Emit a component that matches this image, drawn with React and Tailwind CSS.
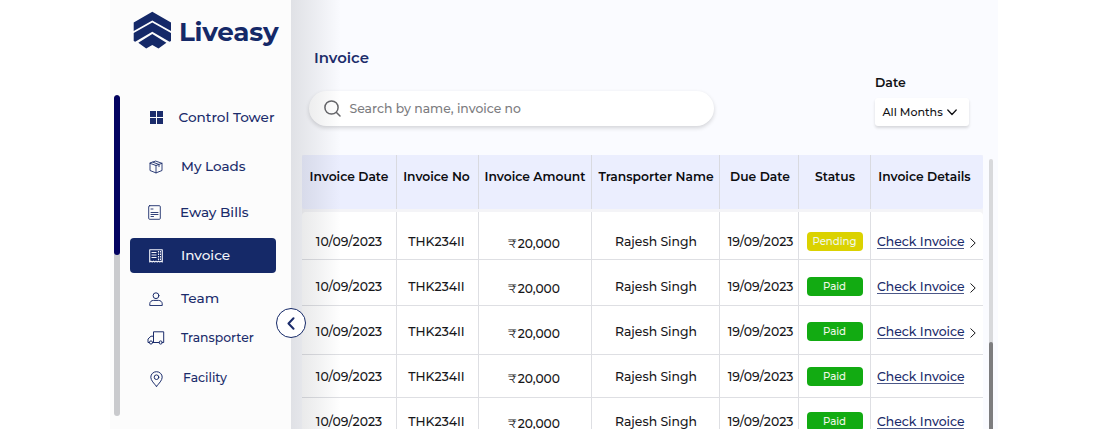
import React from 'react';

const iconProps = {
  fill: 'none',
  stroke: 'currentColor',
  strokeLinecap: 'round',
  strokeLinejoin: 'round',
};

const GridIcon = () => (
  <svg width="13" height="13" viewBox="0 0 13 13" fill="currentColor">
    <path d="M0 0h6v6H0zM7 0h6v6H7zM0 7h6v6H0zM7 7h6v6H7z" />
  </svg>
);

const BoxIcon = () => (
  <svg width="14" height="14" viewBox="0 0 14 14" {...iconProps} strokeWidth=".9">
    <path d="M7 1.200 13 3.300v7.200L7 12.900 1 10.500V3.300zM1 3.300 7 5.500l6-2.200M7 5.500v7.400M4 2.200l6 2.300v2.200" />
  </svg>
);

const BillIcon = () => (
  <svg width="13" height="15" viewBox="0 0 13 15" {...iconProps} strokeWidth=".9">
    <rect x=".7" y=".7" width="11.600" height="13.600" rx="1" />
    <path d="M3 4h2M3 7.500h7M3 9.500h7M3 11.500h2.500" />
  </svg>
);

const ReceiptIcon = () => (
  <svg width="14" height="14" viewBox="0 0 14 14" {...iconProps} strokeLinecap="butt" strokeWidth="1.100">
    <path d="M.7.700h12.600v12.300l-1.200-.9-1.300.9-1.300-.9-1.200.9L7 12.100l-1.300.9-1.300-.9-1.200.9-1.300-.9-1.200.9z" />
    <path d="M2.500 3.500h5M2.500 6h5M2.500 8.500h5" />
    <path d="M9.500 2v9M11.500 2v9" strokeDasharray="1.500 1" />
  </svg>
);

const PersonIcon = () => (
  <svg width="14" height="14" viewBox="0 0 14 14" {...iconProps}>
    <circle cx="7" cy="3.700" r="2.900" />
    <path d="M.8 13.200v-1.500c0-2 1.800-3.300 3.700-3.300h5c1.900 0 3.700 1.300 3.700 3.300v1.500z" />
  </svg>
);

const TruckIcon = () => (
  <svg width="18" height="14" viewBox="0 0 18 14" {...iconProps}>
    <path d="M6.500 11.500V.8h10.200v10.700h-1.400M6.500 5.200H4L1 8v3.500h1.300M5.500 11.500h6.700" />
    <circle cx="4" cy="11.500" r="1.600" />
    <circle cx="13.700" cy="11.500" r="1.600" />
  </svg>
);

const PinIcon = () => (
  <svg width="13" height="16" viewBox="0 0 13 16" {...iconProps}>
    <path d="M6.500 15.300C4 12.500.8 9.200.8 6.200a5.700 5.500 0 0 1 11.400 0c0 3-3.200 6.300-5.700 9.100z" />
    <circle cx="6.500" cy="6.200" r="2.300" />
  </svg>
);

const menu = [
  { label: 'Control Tower', Icon: GridIcon, row: 'h-[51px]', icon: 'pl-[5px]', text: 'pl-[1.500px] text-[13.600px]' },
  { label: 'My Loads', Icon: BoxIcon, row: 'h-[47px]', icon: 'pl-[5px]', text: 'pl-[4px] text-[13.500px]' },
  { label: 'Eway Bills', Icon: BillIcon, row: 'h-[44px]', icon: 'pl-[2px]', text: 'pl-[3px] text-[13.600px]' },
  { label: 'Invoice', Icon: ReceiptIcon, row: 'h-[35px] mt-[4px] rounded-[4px] bg-[#152968] text-[#f3f4fa]', icon: 'pl-[4px]', text: 'pl-[4px] text-[13.600px]' },
  { label: 'Team', Icon: PersonIcon, row: 'h-[43px] mt-[4px]', icon: 'pl-[4px]', text: 'pl-[4px] text-[13.700px]' },
  { label: 'Transporter', Icon: TruckIcon, row: 'h-[35px]', icon: 'pl-[4px]', text: 'pl-[4px] pt-px text-[12.400px]' },
  { label: 'Facility', Icon: PinIcon, row: 'h-[47px]', icon: 'pl-[5px]', text: 'pl-[6px] text-[12.400px]' },
];

const columns = 'grid grid-cols-[95px_82px_113px_128px_79px_72px_112px]';

const headings = [
  { label: 'Invoice Date', pad: '' },
  { label: 'Invoice No', pad: 'pr-[2px]' },
  { label: 'Invoice Amount', pad: '' },
  { label: 'Transporter Name', pad: 'pl-px' },
  { label: 'Due Date', pad: 'pl-[2px]' },
  { label: 'Status', pad: 'pl-px' },
  { label: 'Invoice Details', pad: 'pr-[5px]' },
];

const rows = [
  { status: 'Pending', arrow: true, box: 'h-[48px]', cell: 'pt-[20px]' },
  { status: 'Paid', arrow: true, box: 'h-[46px]', cell: 'pt-[17px]' },
  { status: 'Paid', arrow: true, box: 'h-[49px]', cell: 'pt-[16px]' },
  { status: 'Paid', arrow: false, box: 'h-[43px]', cell: 'pt-[12px]' },
  { status: 'Paid', arrow: false, box: 'h-[48px]', cell: 'pt-[14px]' },
];

function Sidebar() {
  return (
    <aside className="relative z-10 flex h-full w-[181px] shrink-0 flex-col bg-[#fcfcfc] text-[#1b2c6b]">
      <div className="flex h-[92px] shrink-0 items-start gap-[8px] pl-[23px] pt-[11px]">
        <svg width="38" height="38" viewBox="0 0 38 38" fill="#152968" className="shrink-0">
          <path d="M19.300 0.800 38 11.500V19.900L19.300 9.500 0.700 19.900V11.500z" />
          <path d="M19.300 11.500 38 21.900V30L36.500 30.800 19.300 20.800 2.200 30.800 0.700 30V21.900z" />
          <path d="M19.300 22.900 33.400 31.700 25.500 37.500 19.300 33.900 13.200 37.500 5.300 31.700z" />
        </svg>
        <span className="pt-[4px] text-[26.200px] font-bold leading-[34px] tracking-[-0.2px] text-[#152968]">Liveasy</span>
      </div>
      <div className="flex gap-[10px] pl-1">
        <div className="mt-[3px] h-[321px] w-[6px] shrink-0 overflow-hidden rounded-full bg-[#c9cacd]">
          <div className="h-[160px] rounded-full bg-[#02025f]" />
        </div>
        <nav className="flex w-[146px] flex-col font-medium">
          {menu.map(({ label, Icon, row, icon, text }) => (
            <div key={label} className={`flex shrink-0 items-center ${row}`}>
              <span className={`flex w-[47px] shrink-0 justify-center ${icon}`}>
                <Icon />
              </span>
              <span className={`whitespace-nowrap ${text}`}>{label}</span>
            </div>
          ))}
        </nav>
      </div>
      <button className="absolute -right-[15px] top-[308px] flex size-[30px] items-center justify-center rounded-full border border-[#152968] bg-white">
        <svg width="8" height="13" viewBox="0 0 8 13" {...iconProps} strokeWidth="2">
          <path d="M6.500 1.200 1.500 6.500l5 5.300" />
        </svg>
      </button>
    </aside>
  );
}

function Status({ value }) {
  const color = value === 'Pending' ? 'bg-[#dbd200]' : 'bg-[#12ab12]';
  return (
    <span className={`flex h-[19px] w-[56px] items-center justify-center rounded-[4px] text-[10.200px] font-medium text-[#f0f8e8] ${color}`}>
      {value}
    </span>
  );
}

function InvoiceTable() {
  return (
    <div className="flex h-[274px] gap-[6px]">
      <div className="w-[681px] bg-[#f4f4f7]">
        <div className={`${columns} h-[54px] rounded-[2px] bg-[#ebeefe] text-[12.300px] font-semibold text-[#0c0c10]`}>
          {headings.map(({ label, pad }) => (
            <div key={label} className={`flex justify-center whitespace-nowrap border-r border-[#d9dae0] pt-[12px] leading-[20px] last:border-r-0 ${pad}`}>
              {label}
            </div>
          ))}
        </div>
        <div className="mt-[3px] rounded-t-[4px] bg-white text-[12.400px] font-medium text-[#17171a]">
          {rows.map((r, i) => {
            const cell = `flex justify-center whitespace-nowrap border-r border-[#dedfe3] leading-[20px] ${r.cell}`;
            return (
              <div key={i} className={`${columns} border-b border-[#dedfe3] ${r.box}`}>
                <div className={cell}>10/09/2023</div>
                <div className={`${cell} pr-[2px]`}>THK234II</div>
                <div className={`${cell} pr-[2px]`}>
                  <span className="flex gap-px pt-[5px] leading-[14px]">
                    <span className="text-[12px] font-normal">₹</span>
                    <span className="text-[12.300px]">20,000</span>
                  </span>
                </div>
                <div className={`${cell} pl-px`}>Rajesh Singh</div>
                <div className={`${cell} pl-[3px]`}>19/09/2023</div>
                <div className={cell}>
                  <Status value={r.status} />
                </div>
                <div className={`flex gap-[6px] whitespace-nowrap pl-[6px] ${r.cell}`}>
                  <a className="h-[17px] w-[87px] border-b border-[#4c5888] text-[12.400px] leading-[19px] text-[#1b2c6b]">Check Invoice</a>
                  {r.arrow && (
                    <svg width="6" height="10" viewBox="0 0 6 10" {...iconProps} className="mt-[6px]">
                      <path d="M.8.800 5.200 5 .8 9.200" />
                    </svg>
                  )}
                </div>
              </div>
            );
          })}
        </div>
      </div>
      <div className="mt-1 flex w-[4px] flex-col rounded-t-full bg-[#d8d9dc] pt-[183px]">
        <div className="flex-1 rounded-t-full bg-[#7d7d7f]" />
      </div>
    </div>
  );
}

export default function App() {
  return (
    <div className="flex h-[429px] w-[1095px] overflow-hidden bg-white pl-[110px] font-['Montserrat','Inter',sans-serif]">
      <Sidebar />
      <main className="relative h-full w-[707px] shrink-0 overflow-hidden bg-[#fafbff] pl-[11px]">
        <div className="flex h-[155px] justify-between pr-[29px]">
          <div className="pl-[7px]">
            <h1 className="pl-[5px] pt-[48px] text-[14.900px] font-semibold leading-[20px] text-[#1b2c6b]">Invoice</h1>
            <div className="mt-[23px] flex h-[35px] w-[405px] items-center gap-[9px] rounded-full bg-white pl-[14.500px] text-[12.400px] font-medium text-[#7c7c80] shadow-[0_2px_4px_rgba(0,0,0,0.16)]">
              <svg width="17" height="17" viewBox="0 0 17 17" {...iconProps} strokeWidth="1.500" className="text-[#66666a]">
                <circle cx="7.500" cy="7.500" r="6.600" />
                <path d="m12.500 12.500 3.500 3.500" />
              </svg>
              <span className="pt-px">Search by name, invoice no</span>
            </div>
          </div>
          <div className="w-[94px] pt-[73px] text-[#111114]">
            <div className="text-[12.500px] font-semibold leading-[20px]">Date</div>
            <div className="mt-[5px] flex h-[28px] items-center gap-[4px] rounded-[3px] bg-white pl-[7.500px] text-[11.100px] font-medium shadow-[0_2px_3px_rgba(0,0,0,0.14)]">
              <span className="pt-px">All Months</span>
              <svg width="10" height="7" viewBox="0 0 10 7" {...iconProps} strokeWidth="1.300">
                <path d="m.8 1 4.200 4.500L9.200 1" />
              </svg>
            </div>
          </div>
        </div>
        <InvoiceTable />
        <div className="pointer-events-none absolute inset-y-0 left-0 w-[50px] bg-linear-to-r from-[#30343c]/13 via-[#30343c]/7 to-transparent" />
      </main>
    </div>
  );
}
